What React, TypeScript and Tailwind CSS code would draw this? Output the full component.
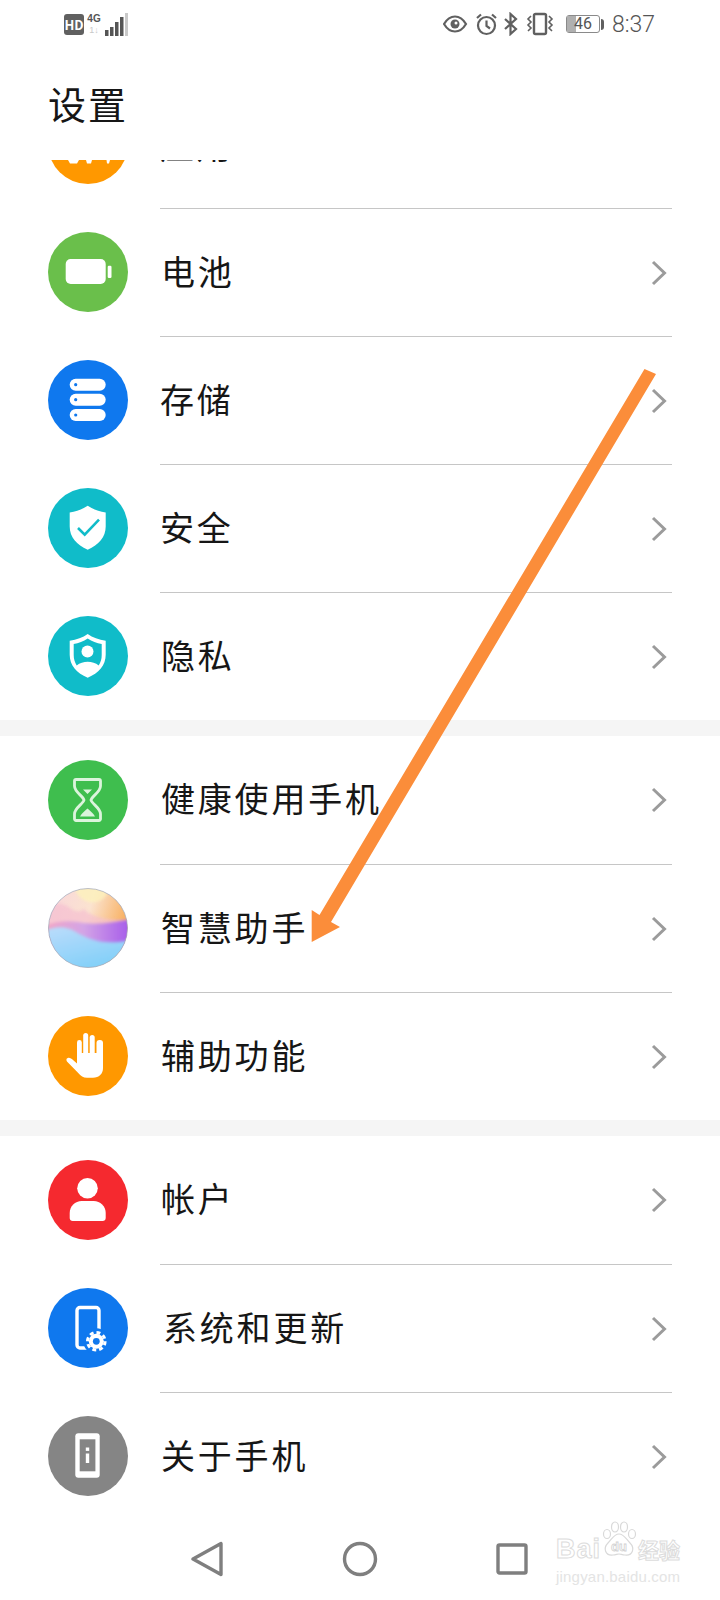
import type { ReactNode } from "react";

const Svg = ({ children }: { children: ReactNode }) => (
  <svg viewBox="0 0 80 80" className="h-20 w-20">
    {children}
  </svg>
);

const AppsIcon = () => (
  <Svg>
    <path d="M20 56h11l-2 3.5h-7zM38 56h6l-1 3.5h-4zM58.500 56h3.500l-1 3.500h-2z" fill="#fff" />
  </Svg>
);

const BatteryIcon = () => (
  <Svg>
    <rect x="17.700" y="27" width="40" height="25" rx="5" fill="#fff" />
    <rect x="59.700" y="33.700" width="3.800" height="12.300" rx="1.200" fill="#fff" />
  </Svg>
);

const StorageIcon = () => (
  <Svg>
    {[18.700, 33.700, 49].map((y) => (
      <g key={y}>
        <rect x="21.700" y={y} width="36" height="12" rx="6" fill="#fff" />
        <circle cx="27.700" cy={y + 6} r="1.600" fill="#0f78ee" />
      </g>
    ))}
  </Svg>
);

const ShieldIcon = () => (
  <Svg>
    <path d="M39.700 17.700c5 3.500 11 5.800 18 6.800v14c0 10.500-7 18.500-18 23.200-11-4.700-18-12.700-18-23.200v-14c7-1 13-3.300 18-6.800z" fill="#fff" />
    <path d="M30 40l6.700 6.700L51 31.700" fill="none" stroke="#10bcc9" strokeWidth="2.600" />
  </Svg>
);

const PrivacyIcon = () => (
  <Svg>
    <path d="M39.700 18c5 3.500 11 5.800 18 6.800v14c0 10.500-7 18.500-18 22.900-11-4.400-18-12.400-18-22.900v-14c7-1 13-3.300 18-6.800z" fill="#fff" />
    <path d="M39.700 22.500c4.300 2.800 9 4.600 14 5.600v11c0 4-1 7.500-3 10.400-3-2.500-7-3.700-11-3.700s-8 1.200-11 3.700c-2-2.900-3-6.400-3-10.400v-11c5-1 9.700-2.800 14-5.600z" fill="#10bcc9" />
    <circle cx="39.500" cy="35.500" r="6" fill="#fff" />
  </Svg>
);

const HourglassIcon = () => (
  <Svg>
    <path
      d="M28 19.500h23a1.500 1.500 0 0 1 1.500 1.500v5c0 6-8.500 10-9.500 14 1 4 9.500 8 9.500 14v5a1.500 1.500 0 0 1-1.500 1.500H28a1.500 1.500 0 0 1-1.500-1.500v-5c0-6 8.500-10 9.500-14-1-4-9.500-8-9.500-14v-5a1.500 1.500 0 0 1 1.500-1.500z"
      fill="none"
      stroke="#dcf4dc"
      strokeWidth="2.800"
    />
    <path d="M35 29.500h9l-4.500 4.500zM32 56.500c1.500-3 5-6 7.500-8 2.500 2 6 5 7.500 8z" fill="#dcf4dc" />
  </Svg>
);

const AssistantIcon = () => (
  <svg viewBox="0 0 80 80" className="h-20 w-20">
    <defs>
      <clipPath id="orb">
        <circle cx="40" cy="40" r="39.500" />
      </clipPath>
      <filter id="soft" x="-20%" y="-20%" width="140%" height="140%">
        <feGaussianBlur stdDeviation="1.400" />
      </filter>
      <linearGradient id="orbTop" x1="0" y1="0" x2="1" y2="0.300">
        <stop offset="0" stopColor="#f8d5dc" />
        <stop offset="0.550" stopColor="#fbe3d0" />
        <stop offset="1" stopColor="#f8b060" />
      </linearGradient>
      <linearGradient id="orbBand" x1="0" y1="0" x2="1" y2="0">
        <stop offset="0" stopColor="#f3a5c4" />
        <stop offset="0.450" stopColor="#d3a4e6" />
        <stop offset="1" stopColor="#a458ea" />
      </linearGradient>
      <linearGradient id="orbBlue" x1="0" y1="0" x2="0.500" y2="1">
        <stop offset="0" stopColor="#bcdcfb" />
        <stop offset="1" stopColor="#7fcff8" />
      </linearGradient>
    </defs>
    <g clipPath="url(#orb)">
      <rect width="80" height="80" fill="url(#orbTop)" />
      <path d="M26-2h34c2 10-8 18-18 16-8-1-14-7-16-16z" fill="#fdf2bc" opacity="0.800" filter="url(#soft)" />
      <path d="M-4 20c8-6 18-6 26 0 6 5 10 4 14 1 6 8 24 12 48 11v30H-4z" fill="#f5bfd0" opacity="0.700" filter="url(#soft)" />
      <path d="M-4 38c10-4 22-6 34-4 14 3 28 2 54-3v30H-4z" fill="url(#orbBand)" filter="url(#soft)" />
      <path d="M-4 43c12-5 22-5 32 1 12 7 26 14 56 8v32H-4z" fill="url(#orbBlue)" filter="url(#soft)" />
    </g>
    <circle cx="40" cy="40" r="39.500" fill="none" stroke="#a0a8ba" strokeWidth="0.700" />
  </svg>
);

const HandIcon = () => (
  <Svg>
    <g fill="#fff">
      <rect x="29" y="24" width="4.800" height="24" rx="2.400" />
      <rect x="35.200" y="17" width="5" height="30" rx="2.500" />
      <rect x="41.700" y="19" width="5" height="28" rx="2.500" />
      <rect x="48.500" y="24" width="6.500" height="24" rx="3" />
      <path d="M29 37h26v15c0 6-4 9.700-10 9.700h-6c-4 0-6-1.500-9-5l-10.800-11c-1.500-2-.5-3.700 1.300-3.900 1.500-.2 3 .8 4.500 2.200l4 3.500z" />
    </g>
  </Svg>
);

const AccountIcon = () => (
  <Svg>
    <circle cx="39.500" cy="28.300" r="10.300" fill="#fff" />
    <path d="M33.700 41h12c6.600 0 12 5.400 12 12v5c0 1.700-1.300 3-3 3H24.700c-1.700 0-3-1.300-3-3v-5c0-6.600 5.400-12 12-12z" fill="#fff" />
  </Svg>
);

const SystemIcon = () => (
  <Svg>
    <rect x="29" y="19.500" width="22" height="40.500" rx="3" fill="none" stroke="#fff" strokeWidth="3.400" />
    <circle cx="48.300" cy="53.300" r="13" fill="#0f78ee" />
    <circle cx="48.300" cy="53.300" r="7.500" fill="#fff" />
    <circle cx="48.300" cy="53.300" r="8.800" fill="none" stroke="#fff" strokeWidth="3" strokeDasharray="3.900 3" />
    <circle cx="48.300" cy="53.300" r="3.400" fill="#0f78ee" />
  </Svg>
);

const AboutIcon = () => (
  <Svg>
    <rect x="27.300" y="17.300" width="24.400" height="44.400" rx="3" fill="#fff" />
    <rect x="31.700" y="23.300" width="15.700" height="32" fill="#858585" />
    <rect x="37.800" y="31.500" width="3.400" height="3.400" fill="#fff" />
    <rect x="37.800" y="37.500" width="3.400" height="9.500" fill="#fff" />
  </Svg>
);

const Chevron = () => (
  <svg viewBox="0 0 16 26" className="h-[26px] w-4">
    <path d="M2 2l11.500 11L2 24" fill="none" stroke="#9b9b9b" strokeWidth="3" />
  </svg>
);

type RowProps = { label: string; bg: string; icon: ReactNode; divider?: boolean; indent?: string };

function Row({ label, bg, icon, divider = true, indent = "pl-px" }: RowProps) {
  return (
    <div className="flex h-[128px] items-center pl-12 pr-12">
      <div className={`h-20 w-20 shrink-0 rounded-full ${bg}`}>{icon}</div>
      <div
        className={`ml-8 flex h-full flex-1 items-center justify-between pr-[5px] ${
          divider ? "border-t border-[#c6c6c6]" : ""
        }`}
      >
        <span className={`mb-1 text-[34px] leading-none tracking-[2.800px] text-[#161616] ${indent}`}>{label}</span>
        <Chevron />
      </div>
    </div>
  );
}

const Band = () => <div className="h-4 bg-[#f5f5f5]" />;

function StatusBar() {
  return (
    <div className="flex h-12 items-center justify-between pl-16 pr-[65px]">
      <div className="flex items-center gap-[3px]">
        <div className="flex h-[21px] w-5 items-center justify-center rounded-[3px] bg-[#606060] text-[13px] font-bold leading-none text-white">
          HD
        </div>
        <div className="flex w-[14px] flex-col items-center gap-[2px] font-['Liberation_Sans',sans-serif] leading-none">
          <span className="text-[10px] font-bold text-[#555]">4G</span>
          <span className="text-[9px] text-[#c8c8c8]">1↓</span>
        </div>
        <svg viewBox="0 0 26 24" className="h-6 w-[26px]">
          <rect x="1" y="18" width="3.500" height="6" fill="#555" />
          <rect x="6" y="15" width="3.500" height="9" fill="#555" />
          <rect x="11" y="10" width="3.500" height="14" fill="#555" />
          <rect x="16" y="5" width="3.500" height="19" fill="#555" />
          <rect x="21" y="1" width="3" height="23" fill="#c9c9c9" />
        </svg>
      </div>
      <div className="flex items-center gap-2">
        <svg viewBox="0 0 111 24" className="mr-1 h-6 w-[111px]" fill="none" stroke="#606060" strokeWidth="2.200">
          <path d="M1 12c3-5 7-7.500 11-7.500S20 7 23 12c-3 5-7 7.500-11 7.500S4 17 1 12z" />
          <circle cx="12" cy="12" r="4.500" fill="#606060" stroke="none" />
          <circle cx="13" cy="11" r="1.500" fill="#fff" stroke="none" />
          <circle cx="43.500" cy="13.500" r="8.500" />
          <path d="M43.500 8.500v5.500l3.500 2.500M34 6l4-3.500M53 6l-4-3.500" />
          <path d="M62 7l11 10-5.500 5V2l5.500 5-11 10" />
          <rect x="91" y="2" width="12" height="20" rx="1.500" strokeWidth="2.400" />
          <path d="M88 4l-3 3 3 3-3 3 3 3-3 3M106 4l3 3-3 3 3 3-3 3 3 3" strokeWidth="1.600" />
        </svg>
        <div className="flex items-center gap-px">
          <div className="relative flex h-[18px] w-[34px] items-center justify-center rounded-[3px] border border-[#8a8a8a] font-['Roboto',sans-serif] text-[16px] leading-none text-[#555]">
            <div className="absolute inset-y-0 left-0 w-[9px] bg-[#b0b0b0]" />
            <span className="relative">46</span>
          </div>
          <div className="h-[11px] w-[3px] rounded-r-sm bg-[#606060]" />
        </div>
        <span className="font-['Roboto',sans-serif] text-[23px] font-light leading-none text-[#555]">8:37</span>
      </div>
    </div>
  );
}

function Watermark() {
  return (
    <div className="absolute left-[556px] top-[1521px] flex w-[128px] flex-col font-['Liberation_Sans',sans-serif] text-white">
      <div className="flex items-end">
        <span className="-mb-[6px] w-[44px] text-[27px] font-bold leading-[30px] tracking-[1px] [-webkit-text-stroke:1px_#dcdcdc]">Bai</span>
        <svg viewBox="0 0 38 37" className="h-[37px] w-[38px]" fill="none" stroke="#d9d9d9" strokeWidth="1.200">
          <ellipse cx="7" cy="13" rx="3.500" ry="4.500" />
          <ellipse cx="15" cy="6" rx="3.500" ry="5" />
          <ellipse cx="24" cy="6" rx="3.500" ry="5" />
          <ellipse cx="32" cy="13" rx="3.500" ry="4.500" />
          <path d="M19 13c5 0 7 5 11 9 5 5 3 13-5 12-3 0-4-1-6-1s-3 1-6 1c-8 1-10-7-5-12 4-4 6-9 11-9z" />
          <text x="19" y="30" textAnchor="middle" fontSize="13" fontWeight="700" fill="#fff" stroke="#d2d2d2" strokeWidth="0.800">
            du
          </text>
        </svg>
        <span className="-mb-[3px] font-['Noto_Sans_CJK_SC',sans-serif] text-[21px] font-bold leading-[24px] [-webkit-text-stroke:1px_#dcdcdc]">
          经验
        </span>
      </div>
      <span className="mt-[11px] text-[15px] leading-[15px] tracking-[0.200px] text-[#e4e4e4]">jingyan.baidu.com</span>
    </div>
  );
}

export default function App() {
  return (
    <div className="relative h-[1600px] w-[720px] overflow-hidden bg-white font-['Noto_Sans_CJK_SC','Noto_Sans',sans-serif]">
      <div className="h-[160px]">
        <StatusBar />
        <h1 className="ml-12 mt-[36px] text-[38px] leading-[38px] tracking-[2px] text-[#161616]">设置</h1>
      </div>

      {/* row cut off by the title bar */}
      <div className="flex h-12 overflow-hidden pl-12">
        <div className="-mt-14 h-20 w-20 shrink-0 rounded-full bg-[#ff9800]">
          <AppsIcon />
        </div>
        <span className="-mt-[56px] ml-8 flex h-20 items-center text-[34px] tracking-[2.800px] text-[#161616]">应用</span>
      </div>

      <Row label="电池" bg="bg-[#6abf4b]" icon={<BatteryIcon />} />
      <Row label="存储" bg="bg-[#0f78ee]" icon={<StorageIcon />} indent="" />
      <Row label="安全" bg="bg-[#10bcc9]" icon={<ShieldIcon />} indent="" />
      <Row label="隐私" bg="bg-[#10bcc9]" icon={<PrivacyIcon />} />
      <Band />
      <Row label="健康使用手机" bg="bg-[#3fbe4e]" icon={<HourglassIcon />} divider={false} />
      <Row label="智慧助手" bg="bg-white" icon={<AssistantIcon />} />
      <Row label="辅助功能" bg="bg-[#ff9800]" icon={<HandIcon />} />
      <Band />
      <Row label="帐户" bg="bg-[#f5292f]" icon={<AccountIcon />} divider={false} />
      <Row label="系统和更新" bg="bg-[#0f78ee]" icon={<SystemIcon />} indent="pl-[3px]" />
      <Row label="关于手机" bg="bg-[#858585]" icon={<AboutIcon />} />

      <div className="flex h-20 justify-center pt-[21px]">
        <div className="flex w-[152px] justify-center">
          <svg viewBox="0 0 32 36" className="-ml-[3px] h-9 w-8">
            <path d="M30 2.500v31L2 18z" fill="none" stroke="#7f7f7f" strokeWidth="3.400" strokeLinejoin="round" />
          </svg>
        </div>
        <div className="flex w-[152px] justify-center">
          <svg viewBox="0 0 36 36" className="h-9 w-9">
            <circle cx="18" cy="18" r="15.500" fill="none" stroke="#7f7f7f" strokeWidth="3.400" />
          </svg>
        </div>
        <div className="flex w-[152px] justify-center">
          <svg viewBox="0 0 32 36" className="h-9 w-8">
            <rect x="2" y="4" width="28" height="28" rx="1.500" fill="none" stroke="#7f7f7f" strokeWidth="3.400" />
          </svg>
        </div>
      </div>

      {/* orange annotation arrow drawn over the screenshot */}
      <svg viewBox="0 0 720 1600" className="pointer-events-none absolute inset-0 h-[1600px] w-[720px] blur-[0.6px]">
        <polygon points="644.500,369 656,374 331,922 340,927 311.700,942 311.700,910 319.500,915" fill="#fb8d3a" />
      </svg>

      <Watermark />
    </div>
  );
}
